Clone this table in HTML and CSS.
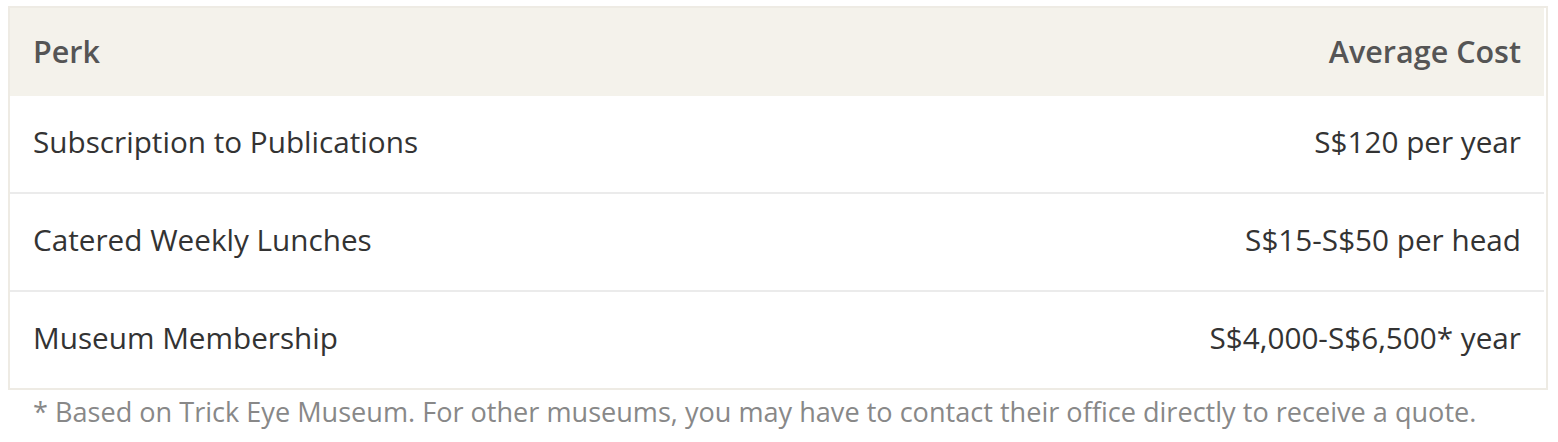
FILE: index.html
```html
<!DOCTYPE html>
<html>
<head>
<meta charset="utf-8">
<link rel="stylesheet" href="styles.css">
</head>
<body>
<div class="table-wrap">
  <table class="perks">
    <thead>
      <tr><th class="left">Perk</th><th class="right">Average Cost</th></tr>
    </thead>
    <tbody>
      <tr><td class="left">Subscription to Publications</td><td class="right">S$120 per year</td></tr>
      <tr><td class="left">Catered Weekly Lunches</td><td class="right">S$15-S$50 per head</td></tr>
      <tr><td class="left">Museum Membership</td><td class="right">S$4,000-S$6,500* year</td></tr>
    </tbody>
  </table>
</div>
<p class="note">* Based on Trick Eye Museum. For other museums, you may have to contact their office directly to receive a quote.</p>
</body>
</html>
```

FILE: styles.css
```css
html, body { background: #fff; }
body {
  margin: 6px 10px 0 8px;
  font-family: "Open Sans", "Noto Sans", sans-serif;
  color: #333;
}
.table-wrap {
  border: 2px solid #eeebe4;
  padding-right: 2px;
}
.perks {
  width: 100%;
  border-collapse: collapse;
  font-size: 29.7px;
}
.perks th {
  background: #f4f2eb;
  color: #555;
  font-weight: 600;
  font-size: 30.5px;
  height: 88px;
  padding: 0 23px 2px;
  box-sizing: border-box;
}
.perks td {
  height: 91px;
  padding: 0 23px 5px;
  border-top: 2px solid #ebebeb;
}
.perks tbody tr:first-child td { border-top: none; }
.left { text-align: left; }
.right { text-align: right; }
.note {
  margin: 3px 0 0 25px;
  font-size: 27.1px;
  color: #888;
}
```
